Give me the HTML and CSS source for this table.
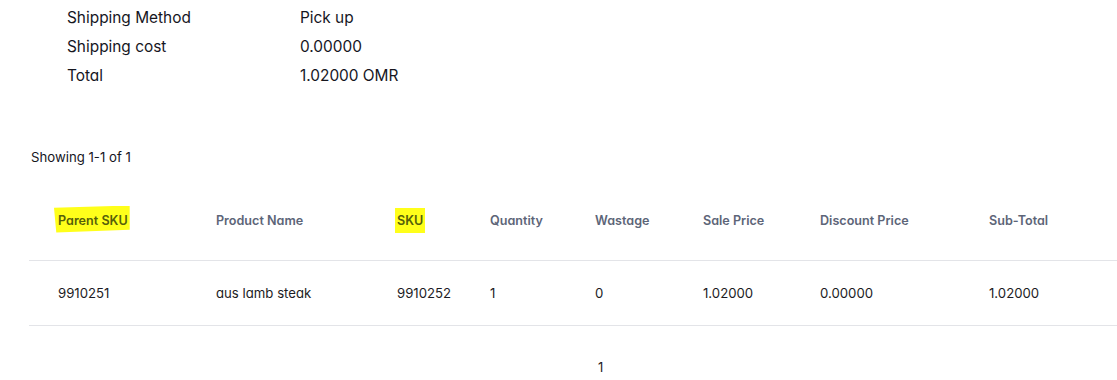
FILE: index.html
```html
<!DOCTYPE html>
<html>
<head>
<meta charset="utf-8">
<link rel="stylesheet" href="styles.css">
</head>
<body>
<div class="summary">
  <div class="label">Shipping Method</div><div class="value">Pick up</div>
  <div class="label">Shipping cost</div><div class="value">0.00000</div>
  <div class="label">Total</div><div class="value">1.02000 OMR</div>
</div>
<div class="showing">Showing 1-1 of 1</div>
<table class="items">
  <colgroup>
    <col class="c1"><col class="c2"><col class="c3"><col class="c4"><col class="c5"><col class="c6"><col class="c7"><col class="c8">
  </colgroup>
  <thead>
    <tr>
      <th class="first"><span class="hl hl-parent">Parent SKU</span></th>
      <th>Product Name</th>
      <th><span class="hl hl-sku">SKU</span></th>
      <th>Quantity</th>
      <th>Wastage</th>
      <th>Sale Price</th>
      <th>Discount Price</th>
      <th>Sub-Total</th>
    </tr>
  </thead>
  <tbody>
    <tr>
      <td class="first">9910251</td>
      <td>aus lamb steak</td>
      <td>9910252</td>
      <td>1</td>
      <td>0</td>
      <td>1.02000</td>
      <td>0.00000</td>
      <td>1.02000</td>
    </tr>
  </tbody>
</table>
<div class="pager"><span class="page">1</span></div>
</body>
</html>
```
FILE: styles.css
```css
html, body {
  margin: 0;
  padding: 0;
  background: #ffffff;
  overflow: hidden;
}
body {
  font-family: Inter, "Noto Sans", sans-serif;
  font-feature-settings: "cv11" 1;
  color: #1c1c28;
  width: 1117px;
}
.summary {
  display: grid;
  grid-template-columns: 233px auto;
  grid-auto-rows: 29px;
  padding: 3px 0 0 67px;
  font-size: 15.4px;
  line-height: 29px;
  color: #16161e;
}
.showing {
  margin-top: 57px;
  padding-left: 31px;
  font-size: 13.2px;
  line-height: 20px;
  color: #16161e;
}
.items {
  margin-top: 13px;
  margin-left: 29px;
  width: 1100px;
  border-collapse: collapse;
  table-layout: fixed;
  font-size: 13px;
}
.c1 { width: 187px; }
.c2 { width: 181px; }
.c3 { width: 93px; }
.c4 { width: 105px; }
.c5 { width: 108px; }
.c6 { width: 117px; }
.c7 { width: 169px; }
.items th, .items td {
  text-align: left;
  padding: 0;
  vertical-align: middle;
}
.items th {
  height: 80px;
  font-size: 12.6px;
  color: #5d6578;
  font-weight: 600;
  border-bottom: 1px solid #e3e4e8;
}
.items td {
  height: 64px;
  font-size: 13.2px;
  color: #1c1c24;
  font-weight: 400;
  border-bottom: 1px solid #e3e4e8;
}
.items .first {
  padding-left: 29px;
}
.hl {
  background: #ffff1a;
  color: #56600a;
}
.hl-parent {
  padding: 7px 2px 5px 4px;
  margin-left: -4px;
  clip-path: polygon(0 8%, 100% 0, 100% 90%, 3% 100%);
}
.hl-sku {
  padding: 5px 2px 5px 2px;
  margin-left: -2px;
}
.pager {
  padding-left: 598px;
  padding-top: 32px;
  font-size: 13px;
  line-height: 18px;
}
.page {
  color: #1c1c24;
}
```
